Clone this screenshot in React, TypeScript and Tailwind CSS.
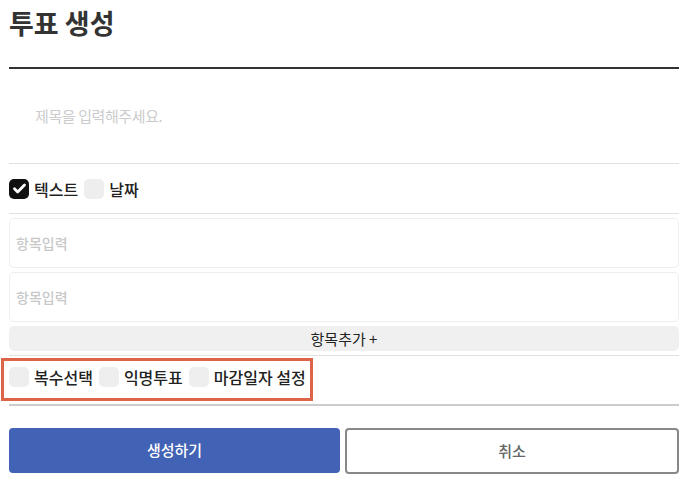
import { useState } from 'react'

function Check({ checked, label }: { checked?: boolean; label: string }) {
  return (
    <label className="flex items-center gap-[5px] text-[16px] font-medium text-[#222]">
      <span
        className={`w-[20px] h-[20px] rounded-[5px] flex items-center justify-center ${
          checked ? 'bg-[#111]' : 'bg-[#eeeeee]'
        }`}
      >
        {checked && (
          <svg width="15" height="15" viewBox="0 0 24 24" fill="none">
            <path d="M4 12.5l5 5L20 6.5" stroke="white" strokeWidth="4.5" strokeLinecap="round" strokeLinejoin="round" />
          </svg>
        )}
      </span>
      {label}
    </label>
  )
}

export default function App() {
  const [items] = useState(['', ''])

  return (
    <div className="w-[695px] h-[487px] bg-white" style={{ fontFamily: '"Noto Sans CJK KR", "Noto Sans", sans-serif' }}>
      <div className="ml-[9px] w-[670px] flex flex-col">
        {/* Title */}
        <div className="h-[67px] border-b-2 border-[#333] box-content">
          <h1 className="text-[27px] font-bold text-[#333] leading-[45px]">투표 생성</h1>
        </div>

        {/* Poll title input */}
        <div className="h-[95px] border-b border-[#e0e0e0] flex items-center pl-[26px]">
          <input
            placeholder="제목을 입력해주세요."
            className="w-full text-[15px] outline-none placeholder:text-[#cccccc] tracking-[-0.4px]"
          />
        </div>

        {/* Type */}
        <div className="h-[50px] border-b border-[#e0e0e0] flex items-center gap-[6px]">
          <Check checked label="텍스트" />
          <Check label="날짜" />
        </div>

        {/* Items */}
        <div className="flex flex-col gap-[4px] pt-[4px] pb-[4px] border-b border-[#e0e0e0]">
          {items.map((_, i) => (
            <input
              key={i}
              placeholder="항목입력"
              className="h-[50px] border border-[#eeeeee] rounded-[5px] px-[6px] text-[14px] font-medium outline-none placeholder:text-[#c8c8c8]"
            />
          ))}
          <button className="h-[25px] bg-[#f0f0f0] rounded-[5px] text-[15px] text-[#222] leading-none">
            항목추가 +
          </button>
        </div>

        {/* Options */}
        <div className="relative h-[50px] border-b-2 border-[#cccccc] flex items-center gap-[6px] pb-[6px]">
          <Check label="복수선택" />
          <Check label="익명투표" />
          <Check label="마감일자 설정" />
          <div className="absolute left-[-8px] top-[2px] w-[312px] h-[43px] border-[3px] border-[#dc6448]" />
        </div>

        {/* Actions */}
        <div className="mt-[22px] flex gap-[5px]">
          <button className="w-[331px] h-[45px] rounded-[4px] bg-[#4262b5] text-white text-[15px] font-medium">
            생성하기
          </button>
          <button className="flex-1 h-[46px] rounded-[4px] border-2 border-[#888888] text-[#666] text-[15px] font-medium">
            취소
          </button>
        </div>
      </div>
    </div>
  )
}
